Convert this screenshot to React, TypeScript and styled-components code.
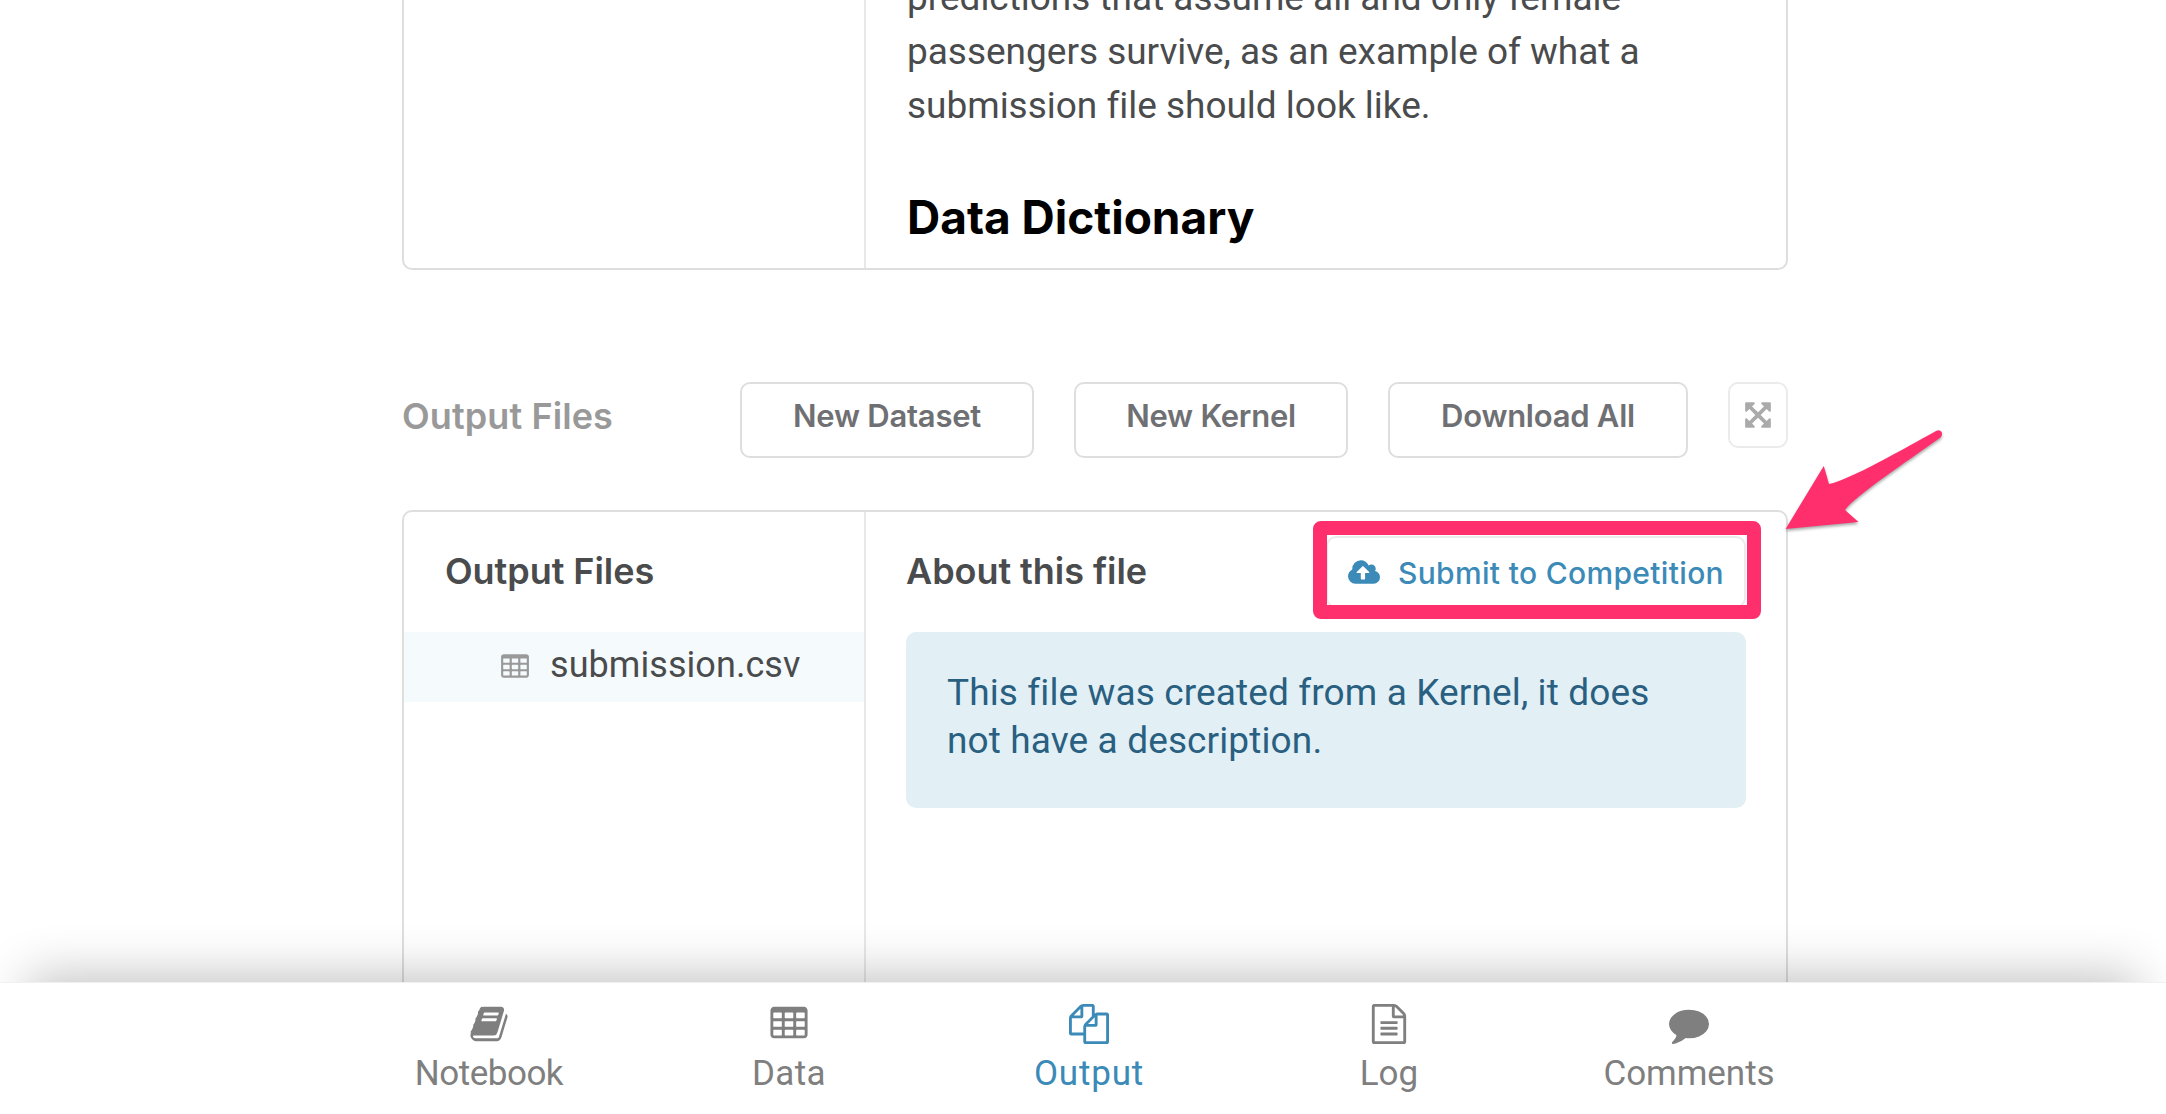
import React from "react";
import styled, { createGlobalStyle } from "styled-components";

const GlobalStyle = createGlobalStyle`
  * { box-sizing: border-box; }
  body {
    margin: 0;
    background: #fff;
    font-family: Roboto, "Liberation Sans", sans-serif;
    color: #4a4b4d;
  }
`;

const headingFont = `Inter, "Liberation Sans", sans-serif`;

const Page = styled.div`
  position: relative;
  display: flex;
  flex-direction: column;
  width: 2166px;
  height: 1114px;
  overflow: hidden;
`;

const Content = styled.main`
  flex: 1;
  min-height: 0;
  width: 1386px;
  margin-left: 402px;
`;

const DataPanel = styled.section`
  display: grid;
  grid-template-columns: 462px 1fr;
  grid-template-rows: 268px;
  height: 270px;
  overflow: hidden;
  border: 2px solid #dedede;
  border-top: 0;
  border-radius: 0 0 10px 10px;
`;

const OutputPanel = styled.section`
  display: grid;
  grid-template-columns: 462px 1fr;
  height: 640px;
  margin-top: 52px;
  border: 2px solid #dedede;
  border-radius: 10px;
`;

const Sidebar = styled.aside`
  border-right: 2px solid #e8e8e8;
`;

const Description = styled.div`
  display: flex;
  flex-direction: column;
  justify-content: flex-end;
  padding: 0 40px 22px 41px;
`;

const Paragraph = styled.p`
  flex: none;
  margin: 0;
  font-size: 37px;
  line-height: 54px;
  letter-spacing: -0.02px;
  white-space: nowrap;
`;

const DictionaryTitle = styled.h2`
  flex: none;
  margin: 55px 0 0;
  font-family: ${headingFont};
  font-size: 46px;
  line-height: 58px;
  font-weight: 700;
  letter-spacing: 0;
  color: #000;
`;

const Toolbar = styled.header`
  display: flex;
  align-items: flex-start;
  gap: 40px;
  height: 76px;
  margin-top: 112px;
`;

const ToolbarTitle = styled.h3`
  flex: 1;
  margin: 12px 0 0;
  font-family: ${headingFont};
  font-size: 36px;
  line-height: 44px;
  font-weight: 600;
  letter-spacing: 0.1px;
  color: #999;
`;

const Button = styled.button<{ $width: number }>`
  width: ${(p) => p.$width}px;
  height: 76px;
  padding: 12px 0 20px;
  border: 2px solid #dedede;
  border-radius: 10px;
  background: #fff;
  font: 600 31px/40px ${headingFont};
  letter-spacing: -0.25px;
  color: #6f7073;
`;

const ExpandButton = styled.button`
  display: flex;
  align-items: center;
  justify-content: center;
  width: 60px;
  height: 66px;
  padding: 0;
  border: 2px solid #ebebeb;
  border-radius: 10px;
  background: #fff;
  color: #aaa;
`;

const PaneHeader = styled.div<{ $inset: number }>`
  display: flex;
  align-items: center;
  justify-content: space-between;
  height: 120px;
  padding-left: ${(p) => p.$inset}px;
`;

const PaneTitle = styled.h4`
  margin: 0;
  padding-bottom: 2px;
  font-family: ${headingFont};
  font-size: 36px;
  line-height: 44px;
  font-weight: 600;
  letter-spacing: -0.05px;
`;

const FileRow = styled.div`
  display: flex;
  align-items: center;
  gap: 20px;
  height: 70px;
  padding-left: 96px;
  background: #f5fafd;
  color: #999;
`;

const FileName = styled.span`
  padding-bottom: 4px;
  font-size: 36px;
  line-height: 44px;
  letter-spacing: 0.06px;
  color: #4a4b4d;
`;

const Details = styled.div`
  padding: 0 40px;
`;

const SubmitButton = styled.button`
  display: flex;
  align-items: center;
  gap: 18px;
  width: 420px;
  height: 72px;
  padding: 2px 0 0 20px;
  border: 2px solid #ebebeb;
  border-radius: 10px;
  background: #fff;
  font: 500 30px/40px ${headingFont};
  letter-spacing: 0.33px;
  white-space: nowrap;
  color: #3b8ab8;
`;

const Notice = styled.p`
  height: 176px;
  margin: 0;
  padding: 37px 39px 43px 41px;
  border-radius: 10px;
  background: #e2eff5;
  font-size: 37px;
  line-height: 48px;
  letter-spacing: 0.12px;
  white-space: nowrap;
  color: #295f80;
`;

const BottomNav = styled.nav`
  position: relative;
  z-index: 1;
  flex: none;
  display: grid;
  grid-template-columns: repeat(5, 300px);
  height: 132px;
  padding-left: 339px;
  border-top: 1px solid #f0f0f0;
  background: #fff;
  box-shadow: 0 -35px 50px -28px rgba(0, 0, 0, 0.24);
`;

const NavItem = styled.a<{ $active?: boolean }>`
  display: flex;
  flex-direction: column;
  align-items: center;
  padding-top: 21px;
  color: ${(p) => (p.$active ? "#3b8ab8" : "#7f7f7f")};
`;

const NavLabel = styled.span<{ $tracking: number }>`
  margin-top: 8px;
  font-size: 35px;
  line-height: 44px;
  letter-spacing: ${(p) => p.$tracking}px;
`;

const Glyph = styled.svg`
  display: block;
  flex: none;
  fill: currentColor;
`;

const Highlight = styled.div`
  position: absolute;
  z-index: 2;
  left: 1313px;
  top: 521px;
  width: 448px;
  height: 97.5px;
  border: 14px solid #ff2f6e;
  border-radius: 8px;
`;

const Pointer = styled.svg`
  position: absolute;
  z-index: 2;
  left: 1770px;
  top: 415px;
  filter: drop-shadow(0 2px 1.5px rgba(0, 0, 0, 0.35));
`;

const cell = (x: number, y: number) =>
  `M${x} ${y}v-192q0-14-9-23t-23-9h-320q-14 0-23 9t-9 23v192q0 14 9 23t23 9h320q14 0 23-9t9-23z`;

const TABLE =
  [576, 1088, 1600].flatMap((x) => [608, 992, 1376].map((y) => cell(x, y))).join("") +
  "M1728 288v1088q0 66-47 113t-113 47h-1344q-66 0-113-47t-47-113v-1088q0-66 47-113t113-47h1344q66 0 113 47t47 113z";

const ICONS = {
  table: TABLE,
  book: "M1703 478q40 57 18 129l-275 906q-19 64-76.5 107.5t-122.5 43.5h-923q-77 0-148.5-53.5t-99.5-131.5q-24-67-2-127 0-4 3-27t4-37q1-8-3-21.5t-3-19.5q2-11 8-21t16.5-23.5 16.5-23.5q23-38 45-91.5t30-91.5q3-10 .5-30t-.5-28q3-11 17-28t17-23q21-36 42-92t25-90q1-9-2.5-32t.5-28q4-13 22-30.5t22-22.5q19-26 42.5-84.5t27.5-96.5q1-8-3-25.5t-2-26.5q2-8 9-18t18-23 17-21q8-12 16.5-30.5t15-35 16-36 19.5-32 26.5-23.5 36-11.5 47.5 5.5l-1 3q38-9 51-9h761q74 0 114 56t18 130l-274 906q-36 119-71.5 153.5t-128.5 34.5h-869q-27 0-38 15-11 16-1 43 24 70 144 70h923q29 0 56-15.5t35-41.5l300-987q7-22 5-57 38 15 59 43zm-1064 2q-4 13 2 22.5t20 9.5h608q13 0 25.5-9.5t16.5-22.5l21-64q4-13-2-22.5t-20-9.5h-608q-13 0-25.5 9.5t-16.5 22.5zm-83 256q-4 13 2 22.5t20 9.5h608q13 0 25.5-9.5t16.5-22.5l21-64q4-13-2-22.5t-20-9.5h-608q-13 0-25.5 9.5t-16.5 22.5z",
  files:
    "M1696 384q40 0 68 28t28 68v1216q0 40-28 68t-68 28h-960q-40 0-68-28t-28-68v-288h-544q-40 0-68-28t-28-68v-672q0-40 20-88t48-76l408-408q28-28 76-48t88-20h416q40 0 68 28t28 68v328q68-40 128-40h416zm-544 213l-299 299h299v-299zm-640-384l-299 299h299v-299zm196 647l316-316v-416h-384v416q0 40-28 68t-68 28h-416v640h512v-256q0-40 20-88t48-76zm956 804v-1152h-384v416q0 40-28 68t-68 28h-416v640h896z",
  log: "M1596 380q28 28 48 76t20 88v1152q0 40-28 68t-68 28h-1344q-40 0-68-28t-28-68v-1600q0-40 28-68t68-28h896q40 0 88 20t76 48zm-444-244v376h376q-10-29-22-41l-313-313q-12-12-41-22zm384 1528v-1024h-416q-40 0-68-28t-28-68v-416h-768v1536h1280zm-1024-864q0-14 9-23t23-9h704q14 0 23 9t9 23v64q0 14-9 23t-23 9h-704q-14 0-23-9t-9-23v-64zm736 224q14 0 23 9t9 23v64q0 14-9 23t-23 9h-704q-14 0-23-9t-9-23v-64q0-14 9-23t23-9h704zm0 256q14 0 23 9t9 23v64q0 14-9 23t-23 9h-704q-14 0-23-9t-9-23v-64q0-14 9-23t23-9h704z",
  comment:
    "M1792 896q0 174-120 321.5t-326 233-450 85.5q-70 0-145-8-198 175-460 242-49 14-114 22-17 2-30.5-9t-17.5-29v-1q-3-4-.5-12t2-10 4.5-9.5l6-9 7-8.5 8-9q7-8 31-34.5t34.5-38 31-39.5 32.5-51 27-59 26-76q-157-89-247.5-220t-90.5-281q0-130 71-248.5t191-204.5 286-136.5 348-50.5q244 0 450 85.5t326 233 120 321.5z",
  expand:
    "M1411 541l-355 355 355 355 144-144q29-31 70-14 39 17 39 59v448q0 26-19 45t-45 19h-448q-42 0-59-40-17-39 14-69l144-144-355-355-355 355 144 144q31 30 14 69-17 40-59 40h-448q-26 0-45-19t-19-45v-448q0-42 40-59 39-17 69 14l144 144 355-355-355-355-144 144q-19 19-45 19-12 0-24-5-40-17-40-59v-448q0-26 19-45t45-19h448q42 0 59 40 17 39-14 69l-144 144 355 355 355-355-144-144q-31-30-14-69 17-40 59-40h448q26 0 45 19t19 45v448q0 42-39 59-13 5-25 5-26 0-45-19z",
};

type IconName = keyof typeof ICONS;

function Icon({ name, size }: { name: IconName; size: number }) {
  return (
    <Glyph width={size} height={size} viewBox="0 0 1792 1792" aria-hidden="true">
      <path d={ICONS[name]} fillRule={name === "table" ? "evenodd" : "nonzero"} />
    </Glyph>
  );
}

function CloudUpload() {
  return (
    <Glyph width={32} height={30} viewBox="-64 0 1920 1792" aria-hidden="true">
      <path d="M1216 864q0-14-9-23l-352-352q-9-9-23-9t-23 9l-351 351q-10 12-10 24 0 14 9 23t23 9h224v352q0 13 9.5 22.5t22.5 9.5h192q13 0 22.5-9.5t9.5-22.5v-352h224q13 0 22.5-9.5t9.5-22.5zm640 288q0 159-112.5 271.5t-271.5 112.5h-1088q-185 0-316.5-131.5t-131.5-316.5q0-130 70-240t188-165q-2-30-2-43 0-212 150-362t362-150q156 0 285.5 87t188.5 231q71-62 166-62 106 0 181 75t75 181q0 76-41 138 130 31 213.5 135.5t83.5 238.5z" />
    </Glyph>
  );
}

const navItems: { icon: IconName; label: string; tracking: number; active?: boolean }[] = [
  { icon: "book", label: "Notebook", tracking: -0.5 },
  { icon: "table", label: "Data", tracking: 0.4 },
  { icon: "files", label: "Output", tracking: 0.8, active: true },
  { icon: "log", label: "Log", tracking: 0 },
  { icon: "comment", label: "Comments", tracking: -0.05 },
];

const actions = [
  { label: "New Dataset", width: 294 },
  { label: "New Kernel", width: 274 },
  { label: "Download All", width: 300 },
];

export default function App() {
  return (
    <Page>
      <GlobalStyle />
      <Content>
        <DataPanel>
          <Sidebar />
          <Description>
            <Paragraph>
              predictions that assume all and only female
              <br />
              passengers survive, as an example of what a
              <br />
              submission file should look like.
            </Paragraph>
            <DictionaryTitle>Data Dictionary</DictionaryTitle>
          </Description>
        </DataPanel>

        <Toolbar>
          <ToolbarTitle>Output Files</ToolbarTitle>
          {actions.map((a) => (
            <Button key={a.label} $width={a.width}>
              {a.label}
            </Button>
          ))}
          <ExpandButton aria-label="Expand">
            <Icon name="expand" size={30} />
          </ExpandButton>
        </Toolbar>

        <OutputPanel>
          <Sidebar>
            <PaneHeader $inset={41}>
              <PaneTitle>Output Files</PaneTitle>
            </PaneHeader>
            <FileRow>
              <Icon name="table" size={30} />
              <FileName>submission.csv</FileName>
            </FileRow>
          </Sidebar>
          <Details>
            <PaneHeader $inset={0}>
              <PaneTitle>About this file</PaneTitle>
              <SubmitButton>
                <CloudUpload />
                Submit to Competition
              </SubmitButton>
            </PaneHeader>
            <Notice>
              This file was created from a Kernel, it does
              <br />
              not have a description.
            </Notice>
          </Details>
        </OutputPanel>
      </Content>

      <BottomNav>
        {navItems.map((n) => (
          <NavItem key={n.label} $active={n.active}>
            <Icon name={n.icon} size={40} />
            <NavLabel $tracking={n.tracking}>{n.label}</NavLabel>
          </NavItem>
        ))}
      </BottomNav>

      <Highlight />
      <Pointer width={190} height={130} viewBox="1770 415 190 130" aria-hidden="true">
        <path
          d="M1785.6 529L1823.8 466L1829 484C1850 480 1905 448 1936.5 430.8Q1940 429.5 1941.6 432Q1942.8 435 1940.5 437.5C1905 463 1856 495 1845 510L1858.5 522Z"
          fill="#ff2f6e"
        />
      </Pointer>
    </Page>
  );
}
